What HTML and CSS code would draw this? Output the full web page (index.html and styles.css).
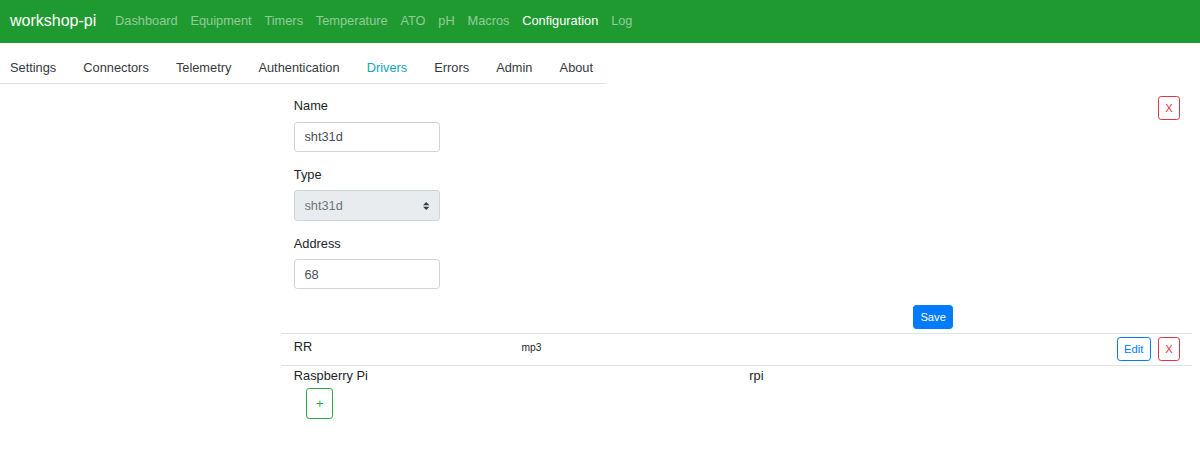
FILE: index.html
```html
<!DOCTYPE html>
<html lang="en">
<head>
<meta charset="utf-8">
<title>workshop-pi</title>
<link rel="stylesheet" href="styles.css">
</head>
<body>
<nav class="navbar">
  <a class="brand" href="#">workshop-pi</a>
  <ul class="nav-links">
    <li><a href="#">Dashboard</a></li>
    <li><a href="#">Equipment</a></li>
    <li><a href="#">Timers</a></li>
    <li><a href="#">Temperature</a></li>
    <li><a href="#">ATO</a></li>
    <li><a href="#">pH</a></li>
    <li><a href="#">Macros</a></li>
    <li><a class="active" href="#">Configuration</a></li>
    <li><a href="#">Log</a></li>
  </ul>
</nav>
<div class="tabs">
  <a class="tab" href="#">Settings</a>
  <a class="tab" href="#">Connectors</a>
  <a class="tab" href="#">Telemetry</a>
  <a class="tab" href="#">Authentication</a>
  <a class="tab tab-active" href="#">Drivers</a>
  <a class="tab" href="#">Errors</a>
  <a class="tab" href="#">Admin</a>
  <a class="tab" href="#">About</a>
</div>
<div class="page">
  <div class="content">
    <div class="top">
      <form class="driver-form">
        <div class="form-group">
          <label class="label">Name</label>
          <input class="control" type="text" value="sht31d">
        </div>
        <div class="form-group">
          <label class="label">Type</label>
          <div class="select-wrap">
            <select class="control select" disabled><option>sht31d</option></select>
            <svg class="select-arrow" viewBox="0 0 4 5" width="6.4" height="8"><path d="M2 0L0 2h4zm0 5L0 3h4z" fill="#343a40"/></svg>
          </div>
        </div>
        <div class="form-group">
          <label class="label">Address</label>
          <input class="control" type="text" value="68">
        </div>
      </form>
      <button class="btn btn-sm btn-outline-danger">X</button>
    </div>
    <div class="save-row">
      <button class="btn btn-sm btn-primary">Save</button>
    </div>
    <div class="list-row list-row-first">
      <div class="cell span-3">RR</div>
      <div class="cell span-3"><small class="small">mp3</small></div>
      <div class="cell span-6 actions">
        <button class="btn btn-sm btn-outline-primary">Edit</button>
        <button class="btn btn-sm btn-outline-danger">X</button>
      </div>
    </div>
    <div class="list-row list-row-second">
      <div class="cell span-6">Raspberry Pi</div>
      <div class="cell span-6">rpi</div>
    </div>
    <div class="add-row">
      <button class="btn btn-outline-success">+</button>
    </div>
  </div>
</div>
</body>
</html>
```

FILE: styles.css
```css
* { box-sizing: border-box; }

body {
  margin: 0;
  font-family: "Liberation Sans", Arial, sans-serif;
  font-size: 12.8px;
  line-height: 1.5;
  color: #212529;
  background: #fff;
}

a { text-decoration: none; }

.navbar {
  display: flex;
  align-items: center;
  height: 43px;
  padding: 0 10px 2px 10px;
  background: #1f9a30;
}

.brand {
  font-size: 16px;
  color: #fff;
  margin-right: 12.4px;
  line-height: 1.5;
}

.nav-links {
  display: flex;
  list-style: none;
  margin: 0;
  padding: 0;
}

.nav-links a {
  display: block;
  padding: 0 6.4px;
  color: rgba(255, 255, 255, 0.5);
}

.nav-links a.active { color: #fff; }

.tabs {
  display: flex;
  gap: 27.1px;
  width: fit-content;
  margin-top: 9px;
  padding: 0 13px 0 10px;
  border-bottom: 1px solid #dee2e6;
}

.tab {
  display: block;
  padding: 6.4px 0 5.4px;
  color: #343a40;
}

.tab-active { color: #17a2b8; }

.page {
  padding-left: 281px;
}

.content {
  width: 911px;
  padding-top: 12px;
}

.top {
  display: flex;
  justify-content: space-between;
  align-items: flex-start;
  padding: 0 12px 0 12.8px;
}

.driver-form {
  width: 146px;
  margin: 0;
}

.form-group { margin-bottom: 12.8px; }

.label {
  display: block;
  margin-bottom: 6.4px;
}

.control {
  display: block;
  width: 100%;
  height: 30.4px;
  padding: 4.8px 9.6px;
  font-family: inherit;
  font-size: 12.8px;
  line-height: 1.5;
  color: #495057;
  background: #fff;
  border: 1px solid #ced4da;
  border-radius: 3.2px;
  margin: 0;
}

.select-wrap { position: relative; }

.select {
  appearance: none;
  -webkit-appearance: none;
  background: #e9ecef;
  opacity: 1;
  color: #6c757d;
}

.select-arrow {
  position: absolute;
  right: 10px;
  top: 11.2px;
}

.btn {
  display: inline-block;
  font-family: inherit;
  font-size: 12.8px;
  line-height: 1.5;
  padding: 4.8px 9.6px;
  border: 1px solid transparent;
  border-radius: 3.2px;
  background: #fff;
  cursor: pointer;
}

.btn-sm {
  font-size: 11.2px;
  padding: 2.6px 6.4px;
}

.btn-primary {
  background: #007bff;
  border-color: #007bff;
  color: #fff;
}

.btn-outline-primary {
  color: #007bff;
  border-color: #007bff;
}

.btn-outline-danger {
  color: #dc3545;
  border-color: #dc3545;
}

.btn-outline-success {
  color: #28a745;
  border-color: #28a745;
  padding: 4.8px 9px;
}

.save-row {
  display: flex;
  padding: 3px 0 4px 632px;
}

.list-row {
  display: grid;
  grid-template-columns: repeat(12, 1fr);
  border-top: 1px solid #dee2e6;
}

.list-row-first {
  padding: 3.2px 0;
}

.cell { padding: 0 12.8px; }

.span-3 { grid-column: span 3; }
.span-6 { grid-column: span 6; }

.small { font-size: 10.24px; }

.actions {
  display: flex;
  justify-content: flex-end;
  gap: 7px;
  padding-right: 12px;
}

.add-row {
  padding: 3px 0 0 25px;
}
```
